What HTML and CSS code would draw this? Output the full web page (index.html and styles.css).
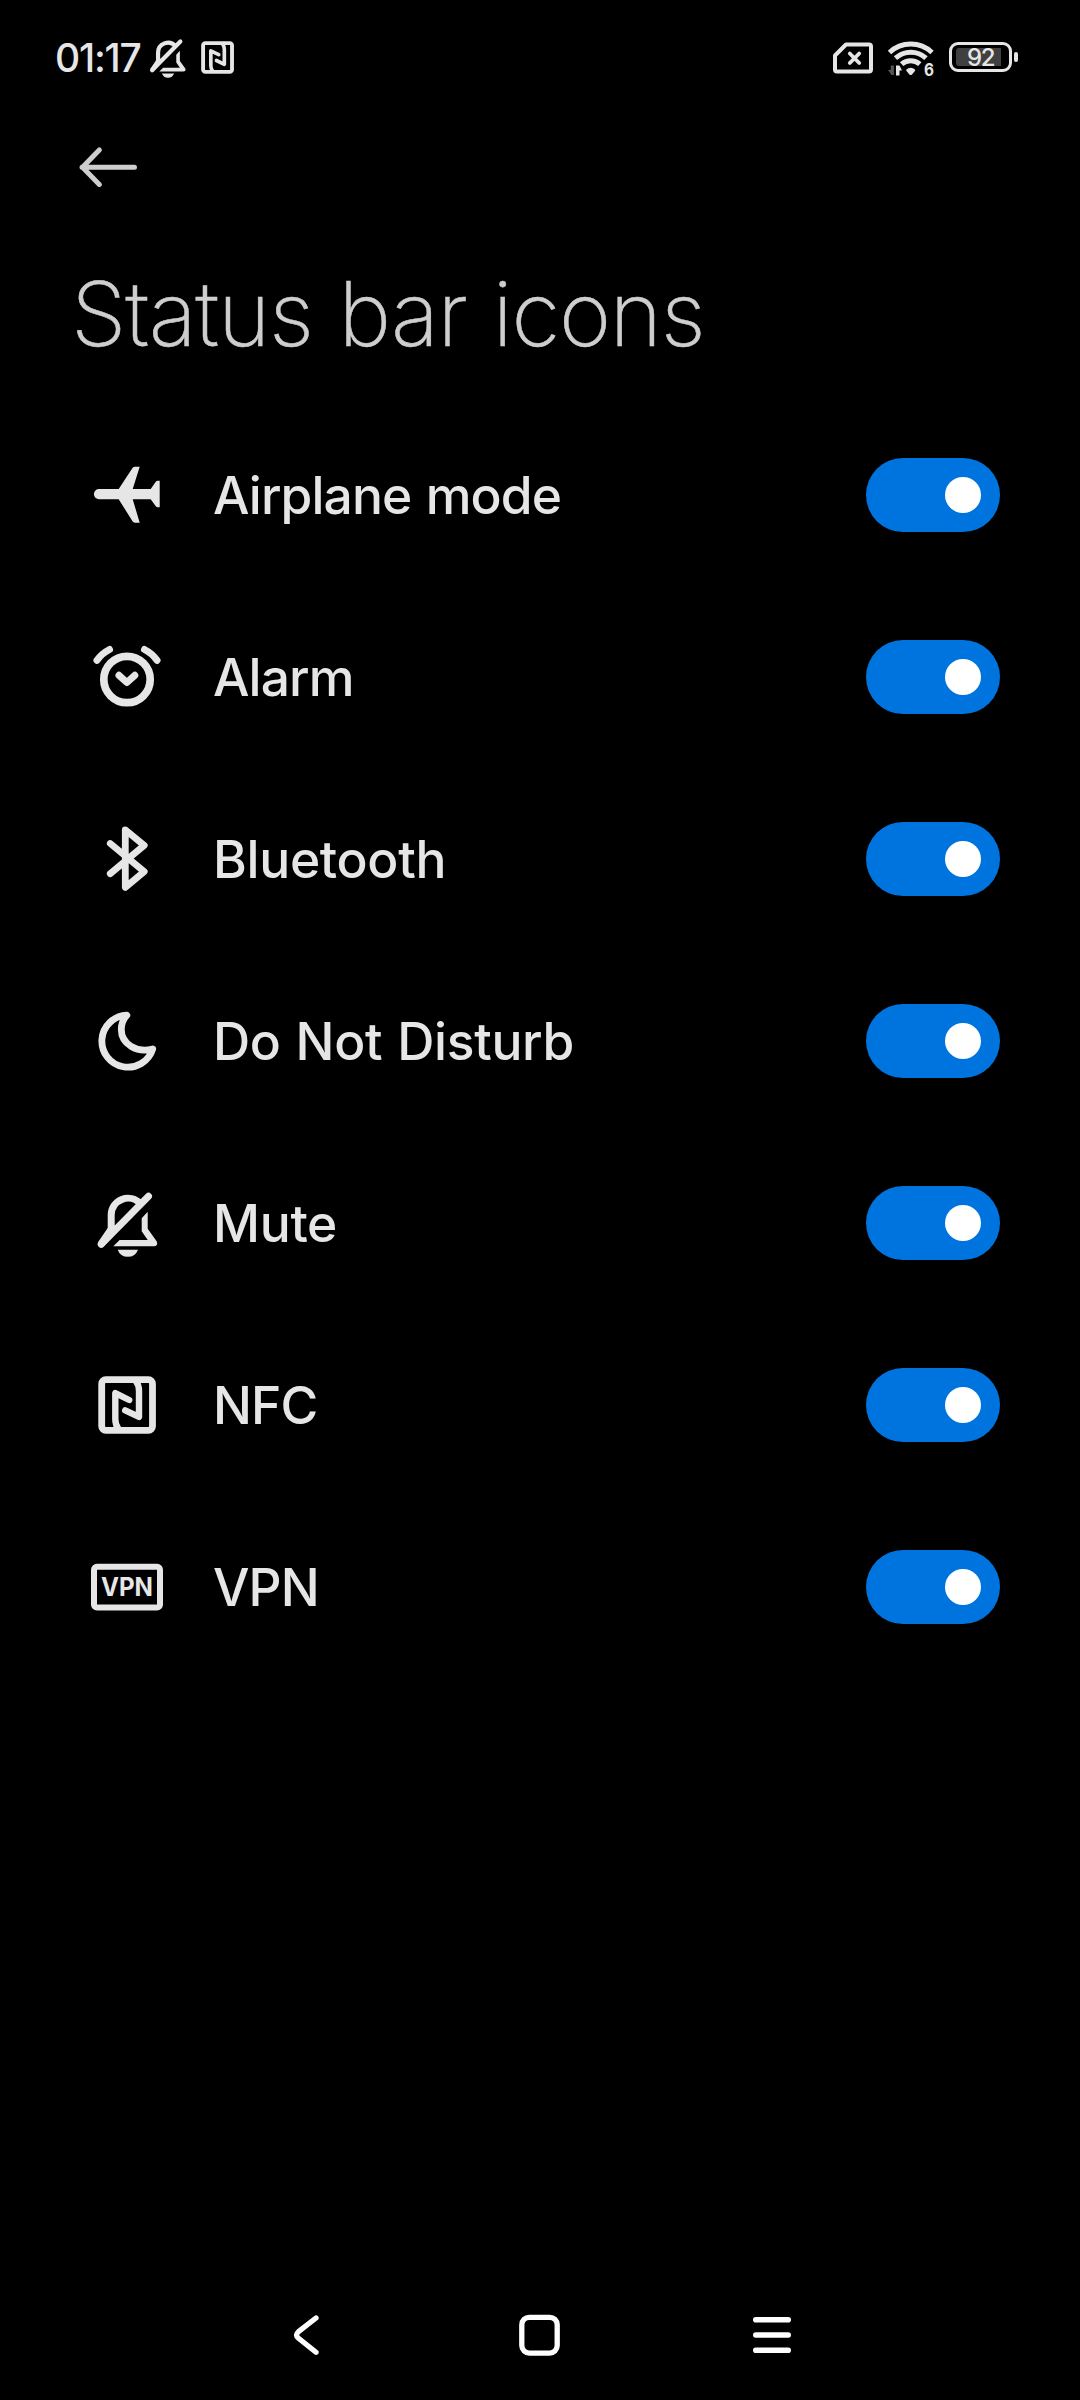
FILE: index.html
```html
<!DOCTYPE html>
<html lang="en">
<head>
    <meta charset="UTF-8">
    <meta name="viewport" content="width=device-width, initial-scale=1.0">
    <title>Status bar icons</title>
    <link rel="stylesheet" href="styles.css">
</head>
<body>

<!-- Icons used more than once -->
<svg class="defs" aria-hidden="true">
    <symbol id="mute" viewBox="0 0 72 72">
        <path class="line" stroke-width="7" d="M10.2 57.2 57.5 9.2M20.2 46V28a16.8 16.8 0 0 1 29-11.5"/>
        <path class="fill" d="M16.7 41 7 55.2l5 5L23.7 47zM56.7 24.7V41.7L65.8 54.5q1.6 4.8-3.3 4.8H22.3L28.6 53H56.7L50.7 44.2V31.3zM26.7 62.7H47a10.8 10.8 0 0 1-20.3 0z"/>
    </symbol>
    <symbol id="nfc" viewBox="0 0 72 72">
        <rect class="line" stroke-width="6.8" x="10.7" y="10.7" width="50.8" height="50.6" rx="4"/>
        <path class="line" stroke-width="6.4" d="M38.2 31 24.3 24.2V50q0 6 3.2 10M34.2 41.3 48 47.9V22q0-6-3.2-10"/>
    </symbol>
</svg>

<header class="status-bar">
    <div class="status-left">
        <span class="clock">01:17</span>
        <svg class="status-mute"><use href="#mute"/></svg>
        <svg class="status-nfc"><use href="#nfc"/></svg>
    </div>
    <div class="status-right">
        <svg class="sim" viewBox="0 0 40 32">
            <path class="line" stroke-width="4" d="M13 2.5H36q2 0 2 2V27.5q0 2-2 2H4q-2 0-2-2V13.5z"/>
            <path class="line" stroke-width="3.8" d="M16.8 11.5l9.4 9.5M26.2 11.5l-9.4 9.5"/>
        </svg>
        <svg class="wifi" viewBox="0 0 48 36">
            <path class="arc" d="M2.5 12.5A31 31 0 0 1 45 12.5M8.5 18.2A22.5 22.5 0 0 1 39 18.2M14.6 24.2A13.5 13.5 0 0 1 32.8 24.2"/>
            <path class="fill" d="M19.5 29.5a6 6 0 0 1 8.4 0q.7.8 0 1.5L25 34.5q-1.3 1.2-2.6 0L19.5 31q-.7-.7 0-1.5zM9 25.5h3.5l2.5 5h-2.5v5H9z"/>
            <path class="dim" d="M3.7 25.5h3.2v9.5H4.5L1 30h2.7z"/>
            <text x="37" y="35.5" textLength="10" lengthAdjust="spacingAndGlyphs">6</text>
        </svg>
        <div class="battery"><div class="battery-level">92</div></div>
    </div>
</header>

<nav class="back">
    <svg viewBox="0 0 58 40"><path class="line" stroke-width="5" d="M55.5 20.3H3M20.3 3 3.5 20.3 20.3 37.5"/></svg>
</nav>

<h1>Status bar icons</h1>

<main>
    <div class="row">
        <svg class="icon" viewBox="0 0 72 72">
            <path class="fill" d="M8 30H27.7L41.5 9Q42.4 7.7 44 7.7H48.7L41.7 30H59.7L64.8 22.7Q65.5 21.7 66.7 21.7H68.7V48.3H66.7Q65.5 48.3 64.8 47.3L59.7 40.2H41.7L48.7 63.7H44Q42.4 63.7 41.5 62.3L27.7 40.2H8A5 5 0 0 1 8 30z"/>
        </svg>
        <span class="label tight">Airplane mode</span>
        <span class="toggle"></span>
    </div>
    <div class="row">
        <svg class="icon" viewBox="0 0 72 72">
            <circle class="line" stroke-width="7.7" cx="36" cy="38.5" r="23.2"/>
            <path class="line" stroke-width="7" d="M28 34.3 35.9 41.5 43.8 34.3"/>
            <path class="line" stroke-width="7" d="M6 19.3Q11 12.3 18.5 8.5M66 19.3Q61 12.3 53.5 8.5"/>
        </svg>
        <span class="label tight">Alarm</span>
        <span class="toggle"></span>
    </div>
    <div class="row">
        <svg class="icon" viewBox="0 0 72 72">
            <path class="line" stroke-width="6.8" d="M19.3 20.5 53.2 48.7 34.3 64.3V6.8L53.2 22.3 19.3 50.7"/>
        </svg>
        <span class="label">Bluetooth</span>
        <span class="toggle"></span>
    </div>
    <div class="row">
        <svg class="icon" viewBox="0 0 72 72">
            <path class="line" stroke-width="6.8" d="M35.8 10.2A26 26 0 1 0 61.7 43.9C46 48.5 30.3 39 30.3 24.5C30.3 18.5 32.3 14 35.8 10.2z"/>
        </svg>
        <span class="label">Do Not Disturb</span>
        <span class="toggle"></span>
    </div>
    <div class="row">
        <svg class="icon"><use href="#mute"/></svg>
        <span class="label">Mute</span>
        <span class="toggle"></span>
    </div>
    <div class="row">
        <svg class="icon"><use href="#nfc"/></svg>
        <span class="label tight">NFC</span>
        <span class="toggle"></span>
    </div>
    <div class="row">
        <svg class="icon" viewBox="0 0 72 72">
            <rect class="line" stroke-width="6" x="3" y="15.7" width="66" height="40.8" rx="3"/>
            <text class="vpn" x="36" y="45.4" textLength="52" lengthAdjust="spacingAndGlyphs">VPN</text>
        </svg>
        <span class="label tight">VPN</span>
        <span class="toggle"></span>
    </div>
</main>

<footer class="nav-bar">
    <svg viewBox="0 0 48 48"><path class="line" stroke-width="5.3" d="M31 7 13.5 20.7Q9.5 24 13.5 27.3L31 41.3"/></svg>
    <svg viewBox="0 0 48 48"><rect class="line" stroke-width="5.3" x="4.8" y="6.3" width="35.4" height="35.8" rx="7.5"/></svg>
    <svg viewBox="0 0 48 48"><path class="line" stroke-width="5.6" d="M7.8 8.7H40.2M7.8 24H40.2M7.8 39.3H40.2"/></svg>
</footer>

</body>
</html>
```
FILE: styles.css
```css
* {
    box-sizing: border-box;
}
body {
    display: flex;
    flex-direction: column;
    height: 2400px;
    margin: 0;
    overflow: hidden;
    font-family: Inter, Roboto, sans-serif;
    color: #e6e6e6;
    background: #000;
}
svg {
    display: block;
    flex: none;
}
.defs {
    position: absolute;
    width: 0;
    height: 0;
}
.line {
    fill: none;
    stroke: currentColor;
    stroke-linecap: round;
    stroke-linejoin: round;
}
.fill {
    fill: currentColor;
}
/* Status bar */
.status-bar {
    display: flex;
    justify-content: space-between;
    align-items: center;
    height: 114px;
    padding: 0 68px 0 55px;
}
.status-left, .status-right {
    display: flex;
    align-items: center;
}
.clock {
    width: 91px;
    font-size: 39px;
    font-weight: 500;
    letter-spacing: -1.2px;
    white-space: nowrap;
}
.status-mute {
    width: 43px;
    height: 43px;
}
.status-nfc {
    width: 41px;
    height: 41px;
    margin-left: 8px;
}
.sim {
    width: 40px;
    height: 32px;
    margin-top: 2px;
}
.wifi {
    width: 48px;
    height: 36px;
    margin: 1px 14px 0;
    overflow: visible;
}
.wifi .arc {
    fill: none;
    stroke: currentColor;
    stroke-width: 5;
}
.wifi .dim {
    fill: #555;
}
.wifi text {
    font-size: 18px;
    font-weight: 700;
    fill: currentColor;
}
.battery {
    position: relative;
    width: 63px;
    height: 30px;
    padding: 3px 4px;
    border: 3px solid #e6e6e6;
    border-radius: 9px;
}
.battery::after {
    content: "";
    position: absolute;
    top: 7px;
    right: -9px;
    width: 4px;
    height: 10px;
    border-radius: 2px;
    background: #e6e6e6;
}
.battery-level {
    width: 45px;
    height: 18px;
    padding-left: 4px;
    border-radius: 3px 0 0 3px;
    font-size: 24px;
    font-weight: 500;
    line-height: 20px;
    letter-spacing: -1.5px;
    text-align: center;
    background: #404040;
}
/* Title */
.back {
    height: 107px;
    padding: 33px 0 0 79px;
    color: #cecece;
}
.back svg {
    width: 58px;
    height: 40px;
}
h1 {
    margin: 0;
    height: 183px;
    padding: 39px 0 0 71px;
    font-size: 89px;
    font-weight: 200;
    line-height: 107px;
    letter-spacing: -1.2px;
    word-spacing: 2px;
    color: #cecece;
    -webkit-text-stroke: 0.5px #cecece;
}
/* List */
.row {
    display: flex;
    align-items: center;
    height: 182px;
    padding: 0 80px 0 91px;
}
.icon {
    width: 72px;
    height: 72px;
}
.label {
    flex: 1;
    padding-left: 50px;
    font-size: 51.5px;
    font-weight: 450;
    letter-spacing: -0.3px;
    word-spacing: 1.5px;
}
.label.tight {
    letter-spacing: -0.9px;
}
.vpn {
    font-size: 25.5px;
    font-weight: 700;
    text-anchor: middle;
    fill: currentColor;
}
.toggle {
    display: flex;
    justify-content: flex-end;
    align-items: center;
    width: 134px;
    height: 74px;
    padding-right: 19px;
    border-radius: 37px;
    background: #0074de;
}
.toggle::before {
    content: "";
    width: 36px;
    height: 36px;
    border-radius: 50%;
    background: #fff;
}
/* Navigation bar */
.nav-bar {
    display: flex;
    justify-content: space-between;
    margin-top: auto;
    padding: 0 284px 41px 285px;
    color: #fff;
}
.nav-bar svg {
    width: 48px;
    height: 48px;
}
```
